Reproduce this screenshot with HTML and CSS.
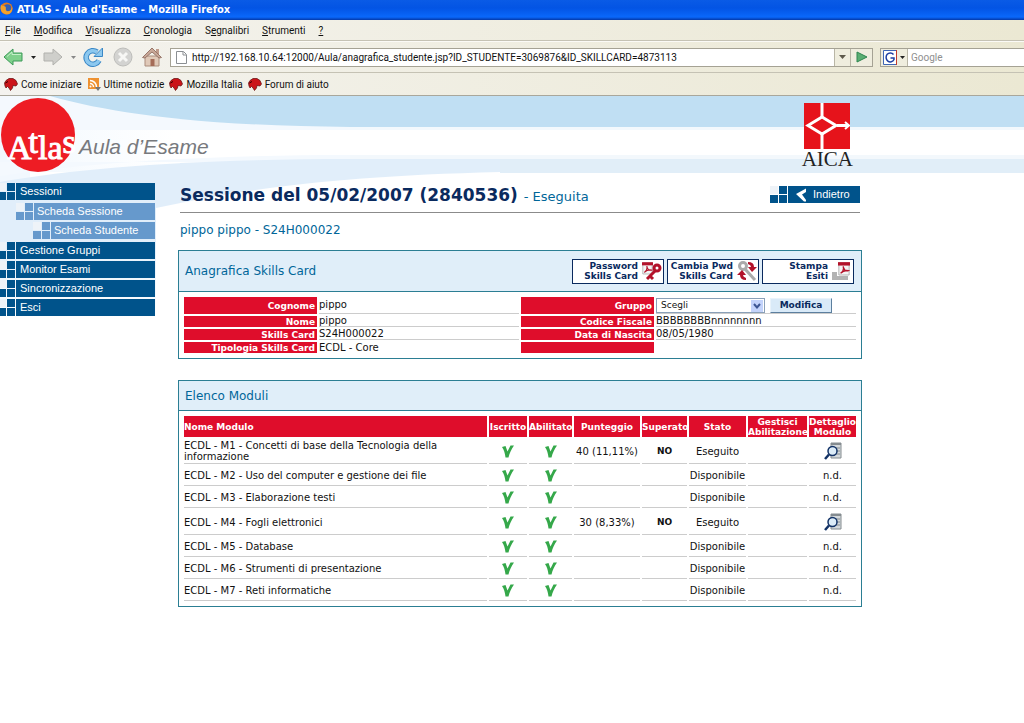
FILE: index.html
```html
<!DOCTYPE html>
<html lang="it">
<head>
<meta charset="utf-8">
<title>ATLAS - Aula d'Esame</title>
<link rel="stylesheet" href="styles.css">
</head>
<body>
<svg class="defs" width="0" height="0" aria-hidden="true">
  <defs>
    <symbol id="check" viewBox="0 0 12 13"><path d="M0 2 L3.500 1 L5.500 6.500 L8.500 0.500 L12 0.500 C9.500 4 7.500 8 6.500 12.500 L3.500 12.500 C3 8 2 5 0 2Z" fill="#35a84a"/></symbol>
    <symbol id="detail" viewBox="0 0 18 18"><path d="M7 1 H17 V16 H7Z" fill="#d4d9dc" stroke="#858c90"/><path d="M7 2 H17" stroke="#858c90" stroke-width="2"/><path d="M12 6 h4 M12 9 h4 M12 12 h4" stroke="#858c90"/><circle cx="8.500" cy="9" r="4.500" fill="#dcecf8" stroke="#123266" stroke-width="1.500"/><path d="M5 12.500 L1 17" stroke="#123266" stroke-width="2.500"/></symbol>
    <symbol id="dino" viewBox="0 0 14 13"><path d="M0.500 5 L2 2.500 L5 0.500 L9 0.500 L12 2.500 L13.500 6 L12 8 L9 7.500 L8.500 10 L6.500 12.500 L5 10 L3.500 8.500 L2 10 L1 8Z" fill="#cb1419" stroke="#5e0c0c" stroke-width=".7"/><path d="M1.500 5 L4 3.500" stroke="#300"/></symbol>
    <symbol id="squares" viewBox="0 0 17 17"><path d="M0 0h8v8H0z" fill="#eef3f8"/><path d="M0 9h8v8H0zM9 0h8v8H9zM9 9h8v8H9z" fill="currentColor"/></symbol>
    <symbol id="pdf" viewBox="0 0 14 16"><path d="M1 1 H13 V15 H1Z" fill="#f4f4f4" stroke="#a9a9a9"/><path d="M0 0 H14 V4 H0Z" fill="#b3122a"/><path d="M3 13 C6 11 7 8 6 5 C7 9 9 11 12 10 C8 9 5 11 3 13" fill="none" stroke="#b3122a" stroke-width="1.500"/></symbol>
  </defs>
</svg>

<header class="browser">
  <div class="titlebar">
    <svg class="fox" viewBox="0 0 15 15" aria-hidden="true"><circle cx="7" cy="7" r="6.500" fill="#e37b1c"/><circle cx="8" cy="6.500" r="4" fill="#3160b8"/><path d="M1 3 C3 5 5 4 6 5 C7 7 5 8 8 10 C11 10 12 8 13 5 C14 11 10 14 6 13 C1 12 0 7 1 3" fill="#f3a12a"/></svg>
    <span>ATLAS - Aula d'Esame - Mozilla Firefox</span>
  </div>
  <nav class="menubar">
    <button><u>F</u>ile</button><button><u>M</u>odifica</button><button><u>V</u>isualizza</button><button><u>C</u>ronologia</button><button>S<u>e</u>gnalibri</button><button><u>S</u>trumenti</button><button><u>?</u></button>
  </nav>
  <div class="toolbar">
    <button class="tool" aria-label="Indietro"><svg width="20" height="18" viewBox="0 0 20 18"><path d="M1 9 L10 1 V5 H19 V13 H10 V17Z" fill="#7fd08c" stroke="#3c9a58"/><path d="M4 8.500 L9 4 V6.500 H18" fill="none" stroke="#c5efc9"/></svg></button>
    <button class="drop" aria-label="Cronologia indietro"><svg width="5" height="3"><path d="M0 0h5L2.500 3z" fill="#222"/></svg></button>
    <button class="tool" aria-label="Avanti"><svg width="20" height="18" viewBox="0 0 20 18"><path d="M19 9 L10 1 V5 H1 V13 H10 V17Z" fill="#cfcfcb" stroke="#b1b1ad"/></svg></button>
    <button class="drop" aria-label="Cronologia avanti"><svg width="5" height="3"><path d="M0 0h5L2.500 3z" fill="#888"/></svg></button>
    <button class="tool reload" aria-label="Ricarica"><svg width="21" height="20" viewBox="0 0 21 20"><path d="M16 13.500 A6.800 6.800 0 1 1 14 5" fill="none" stroke="#3a88c6" stroke-width="5.500"/><path d="M16 13.500 A6.800 6.800 0 1 1 14 5" fill="none" stroke="#8cc8ef" stroke-width="3.500"/><path d="M19.500 1 V9.500 H11Z" fill="#8cc8ef" stroke="#3a88c6"/></svg></button>
    <button class="tool stop" aria-label="Ferma"><svg width="20" height="20" viewBox="0 0 20 20"><circle cx="10" cy="10" r="9" fill="#d3d3d1" stroke="#bdbdba"/><path d="M6 6 L14 14 M14 6 L6 14" stroke="#f7f7f5" stroke-width="3"/></svg></button>
    <button class="tool home" aria-label="Pagina iniziale"><svg width="20" height="20" viewBox="0 0 20 20"><path d="M14 2 h3 v6 h-3z" fill="#c09c8c"/><path d="M3 9 H17 V19 H3Z" fill="#e0c9b8" stroke="#ab8d7c"/><path d="M0.500 10.500 L10 1 L19.500 10.500 L17 11 L10 5 L3 11Z" fill="#c9a898" stroke="#98776a"/><path d="M8.500 12 h4 v7 h-4z" fill="#a56c58"/></svg></button>
    <div class="address">
      <svg width="11" height="13" viewBox="0 0 11 13" aria-hidden="true"><path d="M.5 .5 H7.500 L10.500 3.500 V12.500 H.5Z" fill="#fff" stroke="#8b8f93"/><path d="M7 1 V4 H10" fill="none" stroke="#8b8f93"/></svg>
      <input type="text" aria-label="Indirizzo" value="http://192.168.10.64:12000/Aula/anagrafica_studente.jsp?ID_STUDENTE=3069876&amp;ID_SKILLCARD=4873113">
      <button aria-label="Elenco indirizzi"><svg width="7" height="4"><path d="M0 0h7L3.500 4z" fill="#5d594b"/></svg></button>
      <button class="go" aria-label="Vai"><svg width="12" height="12"><path d="M1 1 L11 6 L1 11Z" fill="#5aae72" stroke="#2f8550"/></svg></button>
    </div>
    <div class="search">
      <button aria-label="Motore di ricerca"><svg width="22" height="15" viewBox="0 0 22 15"><path d="M.5 .5h13v14H.5z" fill="#fff" stroke="#3f66b5"/><path d="M13.500 0v15" stroke="#c43c2c"/><path d="M10.500 4.500 A4.200 4.500 0 1 0 11 9.500 V8 H7.500" fill="none" stroke="#1d3fa3" stroke-width="1.500"/><path d="M17 6h5l-2.500 3z" fill="#222"/></svg></button>
      <input type="text" aria-label="Cerca" placeholder="Google">
    </div>
  </div>
  <nav class="bookmarks">
    <a href="#"><svg width="14" height="13"><use href="#dino"/></svg>Come iniziare</a>
    <a href="#"><svg width="14" height="13" viewBox="0 0 14 13"><path d="M1 0 H12 V11 H1Z" fill="#ee9130"/><path d="M3 2.500 A6.500 6.500 0 0 1 9.500 9 M3 5.500 A3.500 3.500 0 0 1 6.500 9" fill="none" stroke="#fff" stroke-width="1.500"/><circle cx="3.500" cy="8.500" r="1" fill="#fff"/><path d="M8 9 H14 L11 13Z" fill="#777"/></svg>Ultime notizie</a>
    <a href="#"><svg width="14" height="13"><use href="#dino"/></svg>Mozilla Italia</a>
    <a href="#"><svg width="14" height="13"><use href="#dino"/></svg>Forum di aiuto</a>
  </nav>
</header>

<div class="page">
  <svg class="waves" width="500" height="224" viewBox="0 0 500 224" aria-hidden="true">
    <defs>
      <linearGradient id="fade" x1="0" y1="0" x2="0" y2="1"><stop offset="0" stop-color="#e1eefa"/><stop offset=".5" stop-color="#e1eefa"/><stop offset="1" stop-color="#fff"/></linearGradient>
      <linearGradient id="side" x1="0" y1="0" x2="1" y2="0"><stop offset="0" stop-color="#f1f8fe"/><stop offset=".5" stop-color="#fff"/></linearGradient>
    </defs>
    <path d="M0 0 H50 C120 20 220 30 350 31 V34 H0Z" fill="#f4f9fe"/>
    <path d="M0 34 H350 V86 H0Z" fill="url(#side)"/>
    <path d="M0 76 H500 V224 H0Z" fill="#fff"/>
    <path d="M0 34 H30 V90 H0Z" fill="#f2f8fe"/>
    <path d="M0 80 C90 66 210 59 350 59 V66 H0Z" fill="#f4f9fe"/>
    <path d="M0 86 C90 70 210 63 350 63 H500 V76 C340 80 250 92 156 112 V224 H0Z" fill="url(#fade)"/>
  </svg>

  <div class="banner">
    <div class="brand">
      <svg width="76" height="76" viewBox="0 0 76 76" role="img" aria-label="Atlas"><circle cx="38" cy="38" r="37" fill="#ee1c24"/><text class="atlas" x="7" y="62">A<tspan dx="-3" dy="-6">t</tspan><tspan dy="6">l</tspan><tspan>a</tspan><tspan dy="-6">s</tspan></text></svg>
      <span class="product">Aula d’Esame</span>
    </div>
    <div class="aica">
      <svg width="46" height="46" viewBox="0 0 46 46" aria-hidden="true"><path d="M0 0H46V46H0Z" fill="#e6131b"/><path d="M18 0V14 M18 46V31 M33 22.500H44" stroke="#fff" stroke-width="3"/><path d="M4 22.500 L18 14 L32 22.500 L18 31Z" fill="none" stroke="#fff" stroke-width="3"/><path d="M41 19 L45 22.500 L41 26" fill="none" stroke="#fff" stroke-width="2"/></svg>
      <span>AICA</span>
    </div>
  </div>

  <div class="columns">
    <nav class="sidebar">
      <a class="item" href="#"><svg width="17" height="17"><use href="#squares"/></svg><span>Sessioni</span></a>
      <div class="subitems">
        <a class="item sub" href="#"><svg width="17" height="17"><use href="#squares"/></svg><span>Scheda Sessione</span></a>
        <a class="item sub deep" href="#"><svg width="17" height="17"><use href="#squares"/></svg><span>Scheda Studente</span></a>
      </div>
      <a class="item" href="#"><svg width="17" height="17"><use href="#squares"/></svg><span>Gestione Gruppi</span></a>
      <a class="item" href="#"><svg width="17" height="17"><use href="#squares"/></svg><span>Monitor Esami</span></a>
      <a class="item" href="#"><svg width="17" height="17"><use href="#squares"/></svg><span>Sincronizzazione</span></a>
      <a class="item" href="#"><svg width="17" height="17"><use href="#squares"/></svg><span>Esci</span></a>
    </nav>

    <main>
      <div class="heading">
        <h1>Sessione del 05/02/2007 (2840536) <small>- Eseguita</small></h1>
        <a class="item back" href="#"><svg width="17" height="17"><use href="#squares"/></svg><span><svg width="11" height="14" viewBox="0 0 11 14" aria-hidden="true"><path d="M0 6 L10 0.500 V4 L6 6.500 L10 12 V13.500 H8Z" fill="#fff"/></svg>Indietro</span></a>
      </div>
      <h2>pippo pippo - S24H000022</h2>

      <section class="panel">
        <header class="tall">
          <h3>Anagrafica Skills Card</h3>
          <div class="actions">
            <button><span>Password<br>Skills Card</span><svg width="20" height="20" viewBox="0 0 20 20"><use href="#pdf" width="11" height="13" y="1"/><circle cx="15" cy="7" r="3" fill="#fff" stroke="#b3122a" stroke-width="3"/><path d="M13 10 L5 18 M8 15 L11 18" stroke="#b3122a" stroke-width="3"/></svg></button>
            <button><span>Cambia Pwd<br>Skills Card</span><svg width="20" height="20" viewBox="0 0 20 20"><circle cx="6" cy="5" r="3.500" fill="none" stroke="#aaa" stroke-width="3"/><path d="M8 8 L18 19" stroke="#aaa" stroke-width="3"/><path d="M11 1 Q17 1 17 6 L20 6 L15 11 L11 6 H14 Q14 4 11 3Z M9 19 Q3 19 3 14 L0 14 L5 9 L9 14 H6 Q6 16 9 17Z" fill="#b3122a"/></svg></button>
            <button><span>Stampa<br>Esiti</span><svg width="20" height="20" viewBox="0 0 20 20"><path d="M0 11 H5 V15 H16 V19 H0Z" fill="#b3b3b3"/><use href="#pdf" width="12" height="14" x="6" y="1"/></svg></button>
          </div>
        </header>
        <div class="body">
          <table class="card">
            <colgroup><col class="label"><col><col class="label"><col></colgroup>
            <tr class="first"><th>Cognome</th><td>pippo</td><th><label for="gruppo">Gruppo</label></th><td><div class="group"><span class="select"><select id="gruppo"><option>Scegli</option></select><svg width="12" height="12" viewBox="0 0 12 12" aria-hidden="true"><path d="M0 0h12v12H0z" fill="#c3d3fb"/><path d="M3 4 L6 7.500 L9 4" fill="none" stroke="#3d5693" stroke-width="2"/></svg></span><button>Modifica</button></div></td></tr>
            <tr><th>Nome</th><td>pippo</td><th>Codice Fiscale</th><td>BBBBBBBBnnnnnnnn</td></tr>
            <tr><th>Skills Card</th><td>S24H000022</td><th>Data di Nascita</th><td>08/05/1980</td></tr>
            <tr class="last"><th>Tipologia Skills Card</th><td>ECDL - Core</td><th></th><td></td></tr>
          </table>
        </div>
      </section>

      <section class="panel">
        <header><h3>Elenco Moduli</h3></header>
        <div class="body">
          <table class="modules">
            <colgroup><col><col class="c38"><col class="c43"><col class="c66"><col class="c45"><col class="c57"><col class="c59"><col class="c46"></colgroup>
            <thead><tr><th>Nome Modulo</th><th>Iscritto</th><th>Abilitato</th><th>Punteggio</th><th>Superato</th><th>Stato</th><th>Gestisci Abilitazione</th><th>Dettaglio Modulo</th></tr></thead>
            <tbody>
              <tr class="done"><td>ECDL - M1 - Concetti di base della Tecnologia della informazione</td><td><svg width="12" height="13"><use href="#check"/></svg></td><td><svg width="12" height="13"><use href="#check"/></svg></td><td>40 (11,11%)</td><td><b>NO</b></td><td>Eseguito</td><td></td><td><a href="#" aria-label="Dettaglio M1"><svg width="18" height="18"><use href="#detail"/></svg></a></td></tr>
              <tr><td>ECDL - M2 - Uso del computer e gestione dei file</td><td><svg width="12" height="13"><use href="#check"/></svg></td><td><svg width="12" height="13"><use href="#check"/></svg></td><td></td><td></td><td>Disponibile</td><td></td><td>n.d.</td></tr>
              <tr><td>ECDL - M3 - Elaborazione testi</td><td><svg width="12" height="13"><use href="#check"/></svg></td><td><svg width="12" height="13"><use href="#check"/></svg></td><td></td><td></td><td>Disponibile</td><td></td><td>n.d.</td></tr>
              <tr class="done"><td>ECDL - M4 - Fogli elettronici</td><td><svg width="12" height="13"><use href="#check"/></svg></td><td><svg width="12" height="13"><use href="#check"/></svg></td><td>30 (8,33%)</td><td><b>NO</b></td><td>Eseguito</td><td></td><td><a href="#" aria-label="Dettaglio M4"><svg width="18" height="18"><use href="#detail"/></svg></a></td></tr>
              <tr><td>ECDL - M5 - Database</td><td><svg width="12" height="13"><use href="#check"/></svg></td><td><svg width="12" height="13"><use href="#check"/></svg></td><td></td><td></td><td>Disponibile</td><td></td><td>n.d.</td></tr>
              <tr><td>ECDL - M6 - Strumenti di presentazione</td><td><svg width="12" height="13"><use href="#check"/></svg></td><td><svg width="12" height="13"><use href="#check"/></svg></td><td></td><td></td><td>Disponibile</td><td></td><td>n.d.</td></tr>
              <tr><td>ECDL - M7 - Reti informatiche</td><td><svg width="12" height="13"><use href="#check"/></svg></td><td><svg width="12" height="13"><use href="#check"/></svg></td><td></td><td></td><td>Disponibile</td><td></td><td>n.d.</td></tr>
            </tbody>
          </table>
        </div>
      </section>
    </main>
  </div>
</div>
</body>
</html>
```

FILE: styles.css
```css
* { box-sizing: border-box; }
body { margin: 0; background: #fff; color: #111; font-family: "DejaVu Sans", sans-serif; font-size: 9px; }
button, input, select { font: inherit; color: inherit; margin: 0; padding: 0; border: 0; background: none; }
a { color: inherit; text-decoration: none; }
svg { flex: none; }
.defs { position: absolute; }

/* browser chrome */
.browser { font-family: Roboto, "DejaVu Sans Condensed", sans-serif; font-size: 10px; background: linear-gradient(90deg, #f4f3ef, #ebe8d3); border-bottom: 1px solid #a9a79b; }
.titlebar { display: flex; align-items: center; gap: 3px; height: 20px; padding-bottom: 2px; background: linear-gradient(#0a5be6, #0354e4 40%, #0a68fb 85%, #0438a8); color: #fff; font-family: "DejaVu Sans Condensed", "DejaVu Sans", sans-serif; font-size: 11px; font-weight: bold; }
.fox { width: 14px; height: 14px; }
.menubar { display: flex; align-items: center; gap: 13px; height: 21px; padding-left: 5px; border-bottom: 1px solid #c5c2b4; }
.toolbar { display: flex; align-items: center; height: 32px; padding-left: 3px; border-top: 1px solid #fbfaf6; border-bottom: 1px solid #c5c2b4; }
.toolbar button { display: flex; align-items: center; justify-content: center; }
.drop { width: 20px; height: 20px; }
.reload { margin-right: 9px; }
.stop { margin-right: 9px; }
.home { margin-right: 8px; }
.address { display: flex; flex: 1; align-items: center; max-width: 704px; height: 19px; border: 1px solid #a5a294; background: #fff; padding-left: 5px; gap: 5px; }
.address input { flex: 1; min-width: 0; height: 17px; }
.address button { width: 16px; height: 17px; border-left: 1px solid #b9b6a6; background: #efedde; }
.address button + button { width: 22px; margin-left: -5px; }
.search { display: flex; align-items: center; flex: 0 1 144px; min-width: 0; height: 19px; margin-left: 7px; border: 1px solid #a5a294; border-right: 0; background: #fff; }
.search button { flex: none; width: 27px; height: 17px; border-right: 1px solid #b9b6a6; background: #efedde; }
.search input { flex: 1; min-width: 0; padding-left: 3px; }
.search input::placeholder { color: #8f8f8f; opacity: 1; }
.bookmarks { display: flex; align-items: center; gap: 5px; height: 22px; padding-left: 4px; }
.bookmarks a { display: flex; align-items: center; gap: 3px; }

/* page backdrop */
.page { position: relative; background: linear-gradient(#c0dff3 31px, #f3f9fd 31px 34px, #fff 34px 59px, #f3f8fc 59px 63px, #e1eef8 63px 77px, #fff 77px); }
.waves { position: absolute; left: 0; top: 0; }
.banner, .columns { position: relative; }
.banner { display: flex; justify-content: space-between; align-items: flex-start; max-width: 853px; height: 87px; }
.brand { display: flex; align-items: center; gap: 3px; padding-top: 1px; }
.atlas { fill: #fff; stroke: #fff; stroke-width: 1px; font: 34px "Liberation Serif", serif; }
.product { padding-top: 24px; color: #77797d; font: italic 21px "Liberation Sans", sans-serif; }
.aica { display: flex; flex-direction: column; align-items: center; padding-top: 7px; color: #222; font: 21px/20px "Liberation Serif", serif; }
.columns { display: flex; gap: 23px; align-items: flex-start; }

/* navigation */
.sidebar { display: flex; flex-direction: column; flex: none; gap: 2px; width: 155px; }
.subitems { display: flex; flex-direction: column; gap: 2px; margin: 1px 0; }
.item { display: flex; gap: 1px; height: 17px; overflow: hidden; color: #00538b; font: 11px/17px "Liberation Sans", sans-serif; }
.item > svg { margin-left: -2px; }
.item > span { flex: 1; padding-left: 4px; background: #00538b; color: #fff; }
.sub { padding-left: 18px; color: #6699cc; }
.sub > span { background: #6699cc; padding-left: 3px; }
.deep { padding-left: 35px; }
.back { width: 90px; }
.back > svg { margin-left: 0; }
.back > span { display: flex; align-items: center; gap: 6px; padding-left: 8px; }

/* content */
main { flex: 1; min-width: 0; max-width: 684px; }
.heading { display: flex; justify-content: space-between; align-items: center; height: 30px; padding-bottom: 6px; margin: 0 2px; border-bottom: 1px solid #8b8b8b; }
h1, h2, h3 { margin: 0; font-weight: normal; color: #006699; }
h1 { color: #0a2a5e; font-size: 17px; font-weight: bold; }
h1 small { font-size: 13px; font-weight: normal; color: #006699; }
h2 { margin: 9px 2px 11px; font-size: 12px; line-height: 17px; }
h3 { font-size: 12px; }
.panel { border: 1px solid #2b7e93; margin-bottom: 21px; background: #fff; }
.panel > header { display: flex; align-items: center; justify-content: space-between; height: 30px; padding: 0 7px 0 6px; background: #e0eef9; border-bottom: 1px solid #2b7e93; }
.panel > header.tall { height: 41px; }
.actions { display: flex; gap: 3px; }
.actions button { display: flex; align-items: center; justify-content: flex-end; gap: 4px; width: 92px; height: 25px; padding-right: 1px; border: 1px solid #0a2a5e; background: #fff; color: #0a2a5e; font-size: 9px; font-weight: bold; line-height: 10px; text-align: right; white-space: nowrap; }
.body { padding: 3px; }
table { width: 100%; table-layout: fixed; border-collapse: separate; border-spacing: 2px; }
th, td { padding: 0; }
th { background: #df0d2b; color: #fff; font-weight: bold; }
td { border-bottom: 1px solid #ccc; font-size: 10px; }
.card .label { width: 133px; }
.card th { padding-right: 2px; text-align: right; }
.card th, .card td { height: 11px; line-height: 10px; }
.card .first th, .card .first td { height: 17px; }
.card .last td { border-bottom: 0; }
.group { display: flex; align-items: center; gap: 5px; height: 16px; font-size: 9px; }
.select { position: relative; width: 109px; }
.select select { width: 100%; height: 15px; padding-left: 4px; border: 1px solid #8aa0b8; background: #fff; appearance: none; }
.select svg { position: absolute; right: 2px; top: 2px; }
.group button { width: 62px; height: 15px; border: 1px solid; border-color: #e9f3fb #5c7f9e #5c7f9e #e9f3fb; background: #d9eaf8; color: #0a2a5e; font-weight: bold; }
.modules th { height: 21px; line-height: 10px; font-size: 9px; white-space: normal; }
.modules td { height: 20px; line-height: 11px; text-align: center; }
.modules .done td { height: 25px; }
.modules th:first-child, .modules td:first-child { text-align: left; }
.modules td:first-child { padding-right: 30px; }
.modules td b { font-size: 9px; }
.modules svg { display: block; margin: 0 auto; }
.c38 { width: 38px; }
.c43 { width: 43px; }
.c66 { width: 66px; }
.c45 { width: 45px; }
.c57 { width: 57px; }
.c59 { width: 59px; }
.c46 { width: 47px; }
```
